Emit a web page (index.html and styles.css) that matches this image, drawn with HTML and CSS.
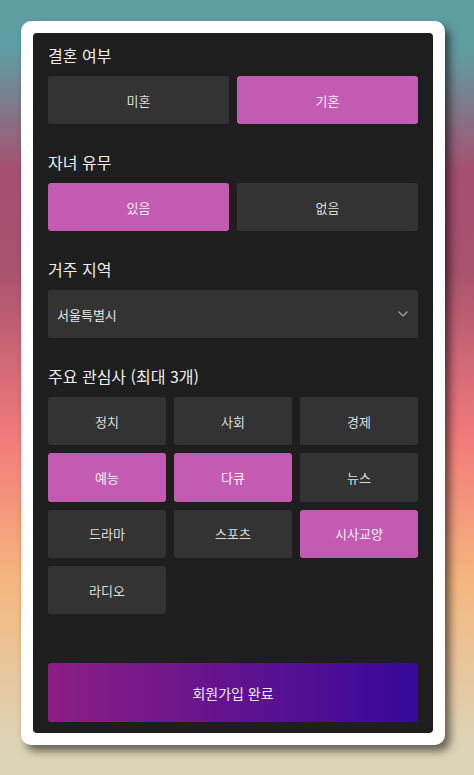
FILE: index.html
```html
<!DOCTYPE html>
<html lang="ko">
<head>
<meta charset="utf-8">
<title>회원가입</title>
<link rel="stylesheet" href="styles.css">
</head>
<body>
<div class="card">
  <div class="panel">
    <section class="section">
      <h2 class="title">결혼 여부</h2>
      <div class="row two">
        <button class="opt">미혼</button>
        <button class="opt on">기혼</button>
      </div>
    </section>
    <section class="section">
      <h2 class="title">자녀 유무</h2>
      <div class="row two">
        <button class="opt on">있음</button>
        <button class="opt">없음</button>
      </div>
    </section>
    <section class="section">
      <h2 class="title">거주 지역</h2>
      <div class="select">
        <span>서울특별시</span>
        <svg class="chev" width="10" height="6" viewBox="0 0 10 6"><path d="M1 1 L5 5 L9 1" fill="none" stroke="#9a9a9a" stroke-width="1.5" stroke-linecap="round" stroke-linejoin="round"/></svg>
      </div>
    </section>
    <section class="section">
      <h2 class="title">주요 관심사 (최대 3개)</h2>
      <div class="row three">
        <button class="opt tag">정치</button>
        <button class="opt tag">사회</button>
        <button class="opt tag">경제</button>
        <button class="opt tag on">예능</button>
        <button class="opt tag on">다큐</button>
        <button class="opt tag">뉴스</button>
        <button class="opt tag">드라마</button>
        <button class="opt tag">스포츠</button>
        <button class="opt tag on">시사교양</button>
        <button class="opt tag">라디오</button>
      </div>
    </section>
    <button class="submit">회원가입 완료</button>
  </div>
</div>
</body>
</html>
```

FILE: styles.css
```css
html, body {
  margin: 0;
  padding: 0;
}
body {
  min-height: 775px;
  padding: 21px;
  box-sizing: border-box;
  font-family: "Noto Sans CJK KR", "Noto Sans", sans-serif;
  background: linear-gradient(to bottom,
    #5f9ea3 0px, #5f9ea3 50px, #a5506f 170px, #a8526f 270px,
    #f37b7b 440px, #f5b67e 580px, #ddd4b6 745px);
}
.card {
  width: 400px;
  padding: 12px;
  background: #fff;
  border-radius: 10px;
  box-shadow: 5px 6px 9px rgba(0, 0, 0, 0.55);
}
.panel {
  background: #1e1e1e;
  border-radius: 4px;
  padding: 11px 15px 11px;
  display: flex;
  flex-direction: column;
}
.section {
  margin-bottom: 27px;
}
.title {
  margin: 0 0 10px;
  font-size: 16px;
  line-height: 22px;
  font-weight: 400;
  color: #eeeeee;
}
.row {
  display: grid;
  gap: 8px;
}
.row.two { grid-template-columns: 1fr 1fr; }
.row.three { grid-template-columns: 1fr 1fr 1fr; }
.opt {
  height: 48px;
  border: none;
  border-radius: 3px;
  background: #333333;
  color: #dddddd;
  font-family: inherit;
  font-size: 13px;
  padding: 0;
}
.opt.tag {
  height: 48.33px;
}
.opt.on {
  background: #c35bb3;
  color: #f8eef6;
}
.select {
  height: 48px;
  border-radius: 3px;
  background: #333333;
  color: #e6e6e6;
  font-size: 13px;
  display: flex;
  align-items: center;
  justify-content: space-between;
  padding: 0 10px 0 9px;
}
.chev { display: block; }
.submit {
  margin-top: 22px;
  height: 59px;
  border: none;
  border-radius: 3px;
  background: linear-gradient(to right, #8d1e84, #360899);
  color: #f2e8f4;
  font-family: inherit;
  font-size: 14px;
}
```
